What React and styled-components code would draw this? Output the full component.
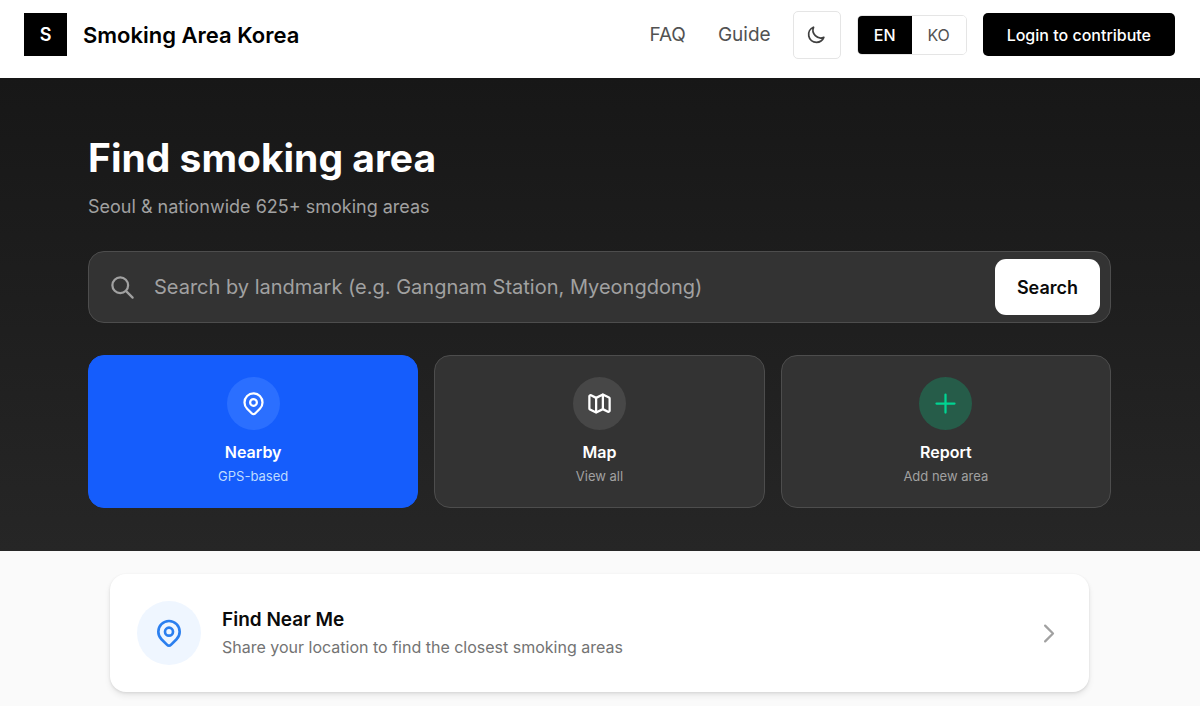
import React from "react";
import styled, { createGlobalStyle } from "styled-components";

const GlobalStyle = createGlobalStyle`
  * {
    box-sizing: border-box;
  }
  body {
    margin: 0;
    background: #fafafa;
    color: #0a0a0a;
    font-family: Inter, "Liberation Sans", sans-serif;
  }
  button,
  input {
    font-family: inherit;
  }
  h1,
  h2,
  p {
    margin: 0;
  }
`;

const Header = styled.header`
  display: flex;
  align-items: center;
  justify-content: space-between;
  height: 78px;
  padding: 0 25px 9px 24px;
  background: #ffffff;
`;
const Brand = styled.a`
  display: flex;
  align-items: center;
  gap: 16px;
  color: #000000;
  font-size: 22px;
  font-weight: 600;
  line-height: 32px;
  text-decoration: none;
`;
const BrandMark = styled.span`
  display: flex;
  align-items: center;
  justify-content: center;
  width: 43px;
  height: 43px;
  background: #000000;
  color: #ffffff;
  font-size: 18px;
  font-weight: 600;
`;
const Actions = styled.div`
  display: flex;
  align-items: center;
  gap: 16px;
`;
const Nav = styled.nav`
  display: flex;
  gap: 32px;
  margin-right: 6px;
`;
const NavLink = styled.a`
  color: #525252;
  font-size: 19px;
  line-height: 28px;
  text-decoration: none;
`;
const ThemeButton = styled.button`
  display: flex;
  align-items: center;
  justify-content: center;
  width: 48px;
  height: 48px;
  padding: 0;
  border: 1px solid #e5e5e5;
  border-radius: 5px;
  background: #ffffff;
  color: #404040;
`;
const LanguageSwitch = styled.div`
  display: flex;
  height: 40px;
  overflow: hidden;
  border: 1px solid #e5e5e5;
  border-radius: 5px;
`;
const LanguageButton = styled.button`
  width: 54px;
  padding: 0;
  border: 0;
  background: ${(props) => (props.$active ? "#000000" : "#ffffff")};
  color: ${(props) => (props.$active ? "#ffffff" : "#525252")};
  font-size: 16px;
  font-weight: ${(props) => (props.$active ? 500 : 400)};
`;
const LoginButton = styled.button`
  height: 43px;
  padding: 0 24px;
  border: 0;
  border-radius: 5px;
  background: #000000;
  color: #ffffff;
  font-size: 16px;
  font-weight: 500;
`;

const Hero = styled.section`
  padding: 53px 25px 43px 24px;
  background: linear-gradient(#171717, #262626);
`;
const HeroInner = styled.div`
  max-width: 1023px;
  margin: 0 auto;
`;
const Title = styled.h1`
  color: #ffffff;
  font-size: 39px;
  font-weight: 700;
  line-height: 53px;
`;
const Subtitle = styled.p`
  margin-top: 9px;
  color: #a1a1a1;
  font-size: 18px;
  line-height: 28px;
`;
const SearchForm = styled.form`
  display: flex;
  align-items: center;
  gap: 18px;
  height: 72px;
  margin-top: 30px;
  padding: 0 10px 0 20px;
  border: 1px solid #4d4d4d;
  border-radius: 16px;
  background: #333333;
  color: #a1a1a1;
`;
const SearchInput = styled.input`
  flex: 1;
  min-width: 0;
  height: 56px;
  padding: 0;
  border: 0;
  outline: 0;
  background: transparent;
  color: #ffffff;
  font-size: 20px;
  &::placeholder {
    color: #a1a1a1;
    opacity: 1;
  }
`;
const SearchButton = styled.button`
  height: 56px;
  padding: 0 22px;
  border: 0;
  border-radius: 11px;
  background: #ffffff;
  color: #0a0a0a;
  font-size: 18px;
  font-weight: 600;
`;
const Tiles = styled.div`
  display: grid;
  grid-template-columns: repeat(3, 1fr);
  gap: 16px;
  margin-top: 32px;
`;
const Tile = styled.button`
  display: flex;
  flex-direction: column;
  align-items: center;
  padding: 21px;
  border: 1px solid ${(props) => (props.$primary ? "#155dfc" : "#4d4d4d")};
  border-radius: 16px;
  background: ${(props) => (props.$primary ? "#155dfc" : "#333333")};
`;
const IconCircle = styled.span`
  display: flex;
  flex-shrink: 0;
  align-items: center;
  justify-content: center;
  width: ${(props) => props.$size}px;
  height: ${(props) => props.$size}px;
  border-radius: 50%;
  background: ${(props) => props.$background};
  color: ${(props) => props.$color};
`;
const TileTitle = styled.span`
  margin-top: 10px;
  color: #ffffff;
  font-size: 16px;
  font-weight: 600;
  line-height: 24px;
`;
const TileText = styled.span`
  margin-top: 2px;
  color: ${(props) => (props.$primary ? "#bedbff" : "#a1a1a1")};
  font-size: 13px;
  line-height: 20px;
`;

const Content = styled.main`
  max-width: 1028px;
  margin: 0 auto;
  padding: 23px 25px 23px 24px;
`;
const NearMeCard = styled.a`
  display: flex;
  align-items: center;
  gap: 21px;
  padding: 27px;
  border-radius: 16px;
  background: #ffffff;
  box-shadow: 0 4px 6px rgba(0, 0, 0, 0.07), 0 1px 3px rgba(0, 0, 0, 0.1);
  color: #a1a1a1;
  text-decoration: none;
`;
const NearMeText = styled.div`
  flex: 1;
  h2 {
    color: #0a0a0a;
    font-size: 19px;
    font-weight: 600;
    line-height: 28px;
  }
  p {
    color: #737373;
    font-size: 16px;
    line-height: 26px;
  }
`;

const PATHS = {
  moon: [
    "M20.354 15.354A9 9 0 018.646 3.646 9.003 9.003 0 0012 21a9.003 9.003 0 008.354-5.646z",
  ],
  search: ["M21 21l-6-6m2-5a7 7 0 11-14 0 7 7 0 0114 0z"],
  pin: [
    "M17.657 16.657L13.414 20.9a1.998 1.998 0 01-2.827 0l-4.244-4.243a8 8 0 1111.314 0z",
    "M15 11a3 3 0 11-6 0 3 3 0 016 0z",
  ],
  map: [
    "M9 20l-5.447-2.724A1 1 0 013 16.382V5.618a1 1 0 011.447-.894L9 7m0 13l6-3m-6 3V7m6 10l4.553 2.276A1 1 0 0021 18.382V7.618a1 1 0 00-.553-.894L15 4m0 13V4m0 0L9 7",
  ],
  plus: ["M12 4v16m8-8H4"],
  chevron: ["M9 5l7 7-7 7"],
};

function Icon({ name, size = 27 }) {
  return (
    <svg
      width={size}
      height={size}
      viewBox="0 0 24 24"
      fill="none"
      stroke="currentColor"
      strokeWidth={2}
      strokeLinecap="round"
      strokeLinejoin="round"
      aria-hidden="true"
    >
      {PATHS[name].map((d) => (
        <path key={d} d={d} />
      ))}
    </svg>
  );
}

const tiles = [
  {
    title: "Nearby",
    text: "GPS-based",
    icon: "pin",
    background: "#2b6fff",
    color: "#ffffff",
    primary: true,
  },
  {
    title: "Map",
    text: "View all",
    icon: "map",
    background: "#474747",
    color: "#ffffff",
  },
  {
    title: "Report",
    text: "Add new area",
    icon: "plus",
    background: "#265c49",
    color: "#00d492",
  },
];

export default function App() {
  const [language, setLanguage] = React.useState("EN");

  return (
    <>
      <GlobalStyle />
      <Header>
        <Brand href="#">
          <BrandMark>S</BrandMark>
          Smoking Area Korea
        </Brand>
        <Actions>
          <Nav>
            <NavLink href="#faq">FAQ</NavLink>
            <NavLink href="#guide">Guide</NavLink>
          </Nav>
          <ThemeButton type="button" aria-label="Toggle dark mode">
            <Icon name="moon" size={21} />
          </ThemeButton>
          <LanguageSwitch>
            {["EN", "KO"].map((code) => (
              <LanguageButton
                key={code}
                type="button"
                $active={language === code}
                onClick={() => setLanguage(code)}
              >
                {code}
              </LanguageButton>
            ))}
          </LanguageSwitch>
          <LoginButton type="button">Login to contribute</LoginButton>
        </Actions>
      </Header>
      <Hero>
        <HeroInner>
          <Title>Find smoking area</Title>
          <Subtitle>Seoul &amp; nationwide 625+ smoking areas</Subtitle>
          <SearchForm onSubmit={(e) => e.preventDefault()}>
            <Icon name="search" />
            <SearchInput
              type="text"
              aria-label="Search by landmark"
              placeholder="Search by landmark (e.g. Gangnam Station, Myeongdong)"
            />
            <SearchButton type="submit">Search</SearchButton>
          </SearchForm>
          <Tiles>
            {tiles.map(({ title, text, icon, background, color, primary }) => (
              <Tile key={title} type="button" $primary={primary}>
                <IconCircle $size={53} $background={background} $color={color}>
                  <Icon name={icon} />
                </IconCircle>
                <TileTitle>{title}</TileTitle>
                <TileText $primary={primary}>{text}</TileText>
              </Tile>
            ))}
          </Tiles>
        </HeroInner>
      </Hero>
      <Content>
        <NearMeCard href="#near-me">
          <IconCircle $size={64} $background="#eff6ff" $color="#2b7fef">
            <Icon name="pin" size={32} />
          </IconCircle>
          <NearMeText>
            <h2>Find Near Me</h2>
            <p>Share your location to find the closest smoking areas</p>
          </NearMeText>
          <Icon name="chevron" />
        </NearMeCard>
      </Content>
    </>
  );
}
